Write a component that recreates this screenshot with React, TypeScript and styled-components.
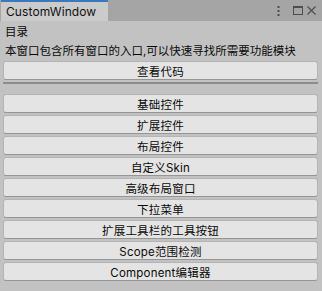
import * as React from "react";
import styled, { createGlobalStyle } from "styled-components";

const GlobalStyle = createGlobalStyle`
  html, body {
    margin: 0;
    padding: 0;
    background: #c2c2c2;
  }
  * {
    box-sizing: border-box;
  }
`;

const FONT = `Inter, "Noto Sans CJK SC", sans-serif`;

const Window = styled.div`
  width: 322px;
  height: 291px;
  background: #c2c2c2;
  font-family: ${FONT};
  color: #0a0a0a;
  display: flex;
  flex-direction: column;
  overflow: hidden;
`;

const TitleBar = styled.div`
  height: 21px;
  background: #a5a5a5;
  display: flex;
  align-items: stretch;
  padding-left: 1px;
`;

const Tab = styled.div`
  width: 107px;
  background: #cbcbcb;
  border-top: 2px solid #3a79bb;
  padding-left: 5px;
  display: flex;
  align-items: center;
  font-size: 12px;
  letter-spacing: 0.1px;
  color: #111;
`;

const TabActions = styled.div`
  margin-left: auto;
  display: flex;
  align-items: center;
  gap: 4px;
  padding-right: 6px;
  color: #4e4e4e;
`;

const MenuDots = styled.svg`
  margin-right: 9px;
`;

const Content = styled.div`
  padding: 2px 4px 0 3px;
  display: flex;
  flex-direction: column;
`;

const Label = styled.div`
  font-size: 11.5px;
  line-height: 19px;
  padding-left: 2px;
  white-space: nowrap;
`;

const Button = styled.div<{ $gapAfter?: number }>`
  height: 19px;
  margin-bottom: ${p => p.$gapAfter ?? 2}px;
  background: #e4e4e4;
  border: 1px solid #b4b4b4;
  border-bottom-color: #959595;
  border-radius: 3px;
  display: flex;
  align-items: center;
  justify-content: center;
  font-size: 11.5px;
  letter-spacing: 0.2px;
  color: #0a0a0a;
  white-space: nowrap;
`;

const Separator = styled.div`
  height: 2px;
  background: #8c8c8c;
  margin: 2px 0 10px;
`;

const KebabIcon = () => (
  <MenuDots width="3" height="10" viewBox="0 0 3 10">
    <rect x="0.5" y="0" width="2" height="2" fill="currentColor" />
    <rect x="0.5" y="4" width="2" height="2" fill="currentColor" />
    <rect x="0.5" y="8" width="2" height="2" fill="currentColor" />
  </MenuDots>
);

const MaximizeIcon = () => (
  <svg width="10" height="9" viewBox="0 0 10 9">
    <rect x="0.5" y="0.5" width="9" height="8" fill="none" stroke="currentColor" />
    <rect x="0" y="0" width="10" height="2" fill="currentColor" />
  </svg>
);

const CloseIcon = () => (
  <svg width="9" height="9" viewBox="0 0 9 9">
    <path d="M0.5 0.5 L8.5 8.5 M8.5 0.5 L0.5 8.5" stroke="currentColor" strokeWidth="1.2" fill="none" />
  </svg>
);

const items = [
  "基础控件",
  "扩展控件",
  "布局控件",
  "自定义Skin",
  "高级布局窗口",
  "下拉菜单",
  "扩展工具栏的工具按钮",
  "Scope范围检测",
  "Component编辑器",
];

export default function App() {
  return (
    <Window>
      <GlobalStyle />
      <TitleBar>
        <Tab>CustomWindow</Tab>
        <TabActions>
          <KebabIcon />
          <MaximizeIcon />
          <CloseIcon />
        </TabActions>
      </TitleBar>
      <Content>
        <Label>目录</Label>
        <Label>本窗口包含所有窗口的入口,可以快速寻找所需要功能模块</Label>
        <Button $gapAfter={0}>查看代码</Button>
        <Separator />
        {items.map(label => (
          <Button key={label}>{label}</Button>
        ))}
      </Content>
    </Window>
  );
}
